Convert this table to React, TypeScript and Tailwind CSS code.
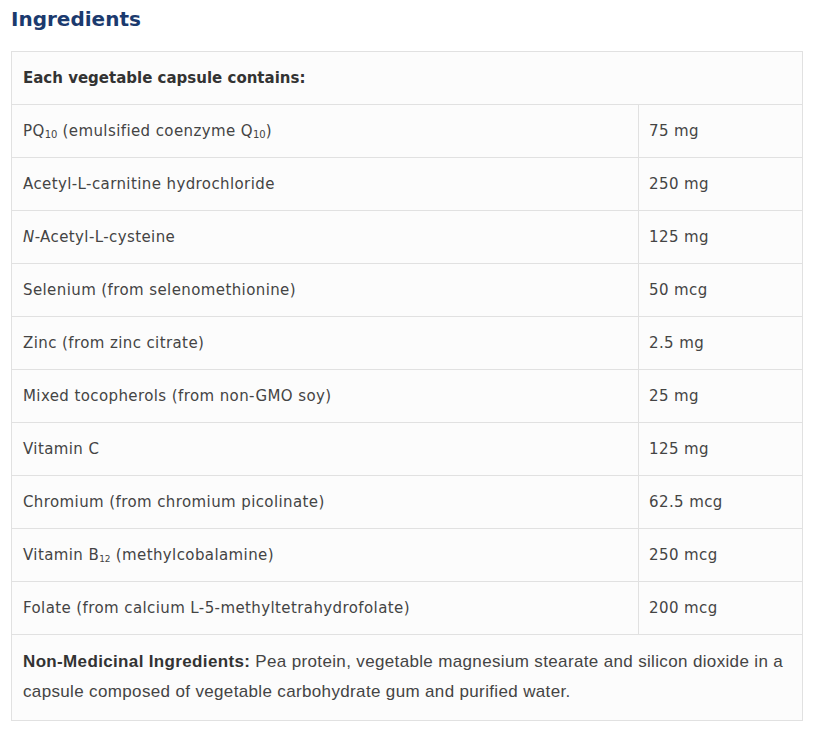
const rows: { name: React.ReactNode; amount: string }[] = [
  {
    name: (
      <>
        PQ<sub className="text-[10px] tracking-normal">10</sub> (emulsified coenzyme Q
        <sub className="text-[10px] tracking-normal">10</sub>)
      </>
    ),
    amount: '75 mg',
  },
  { name: 'Acetyl-L-carnitine hydrochloride', amount: '250 mg' },
  {
    name: (
      <>
        <i>N</i>-Acetyl-L-cysteine
      </>
    ),
    amount: '125 mg',
  },
  { name: 'Selenium (from selenomethionine)', amount: '50 mcg' },
  { name: 'Zinc (from zinc citrate)', amount: '2.5 mg' },
  { name: 'Mixed tocopherols (from non-GMO soy)', amount: '25 mg' },
  { name: 'Vitamin C', amount: '125 mg' },
  { name: 'Chromium (from chromium picolinate)', amount: '62.5 mcg' },
  {
    name: (
      <>
        Vitamin B<sub className="text-[9px] tracking-normal">12</sub> (methylcobalamine)
      </>
    ),
    amount: '250 mcg',
  },
  { name: 'Folate (from calcium L-5-methyltetrahydrofolate)', amount: '200 mcg' },
]

export default function App() {
  return (
    <div className="min-h-screen bg-white px-[11px] pt-[5px] font-['DejaVu_Sans',sans-serif] text-[#444]">
      <h2 className="h-[46px] text-[20px] font-bold leading-[28px] text-[#1b3a6e]">Ingredients</h2>
      <table className="w-[792px] border-collapse bg-[#fcfcfc] text-[15px] tracking-[0.4px]">
        <tbody>
          <tr className="h-[53px]">
            <td colSpan={2} className="border border-[#e1e1e1] px-[11px] font-bold tracking-normal text-[#333]">
              Each vegetable capsule contains:
            </td>
          </tr>
          {rows.map((r, i) => (
            <tr key={i} className="h-[53px]">
              <td className="w-[627px] border border-[#e1e1e1] px-[11px]">{r.name}</td>
              <td className="border border-[#e1e1e1] px-[10px]">{r.amount}</td>
            </tr>
          ))}
          <tr>
            <td
              colSpan={2}
              className="border border-[#e1e1e1] px-[11px] pt-[12px] pb-[13px] font-['Liberation_Sans',sans-serif] text-[17px] leading-[30px] tracking-[0.35px]"
            >
              <b className="text-[#333]">Non-Medicinal Ingredients:</b> Pea protein, vegetable magnesium stearate and
              silicon dioxide in a capsule composed of vegetable carbohydrate gum and purified water.
            </td>
          </tr>
        </tbody>
      </table>
    </div>
  )
}
